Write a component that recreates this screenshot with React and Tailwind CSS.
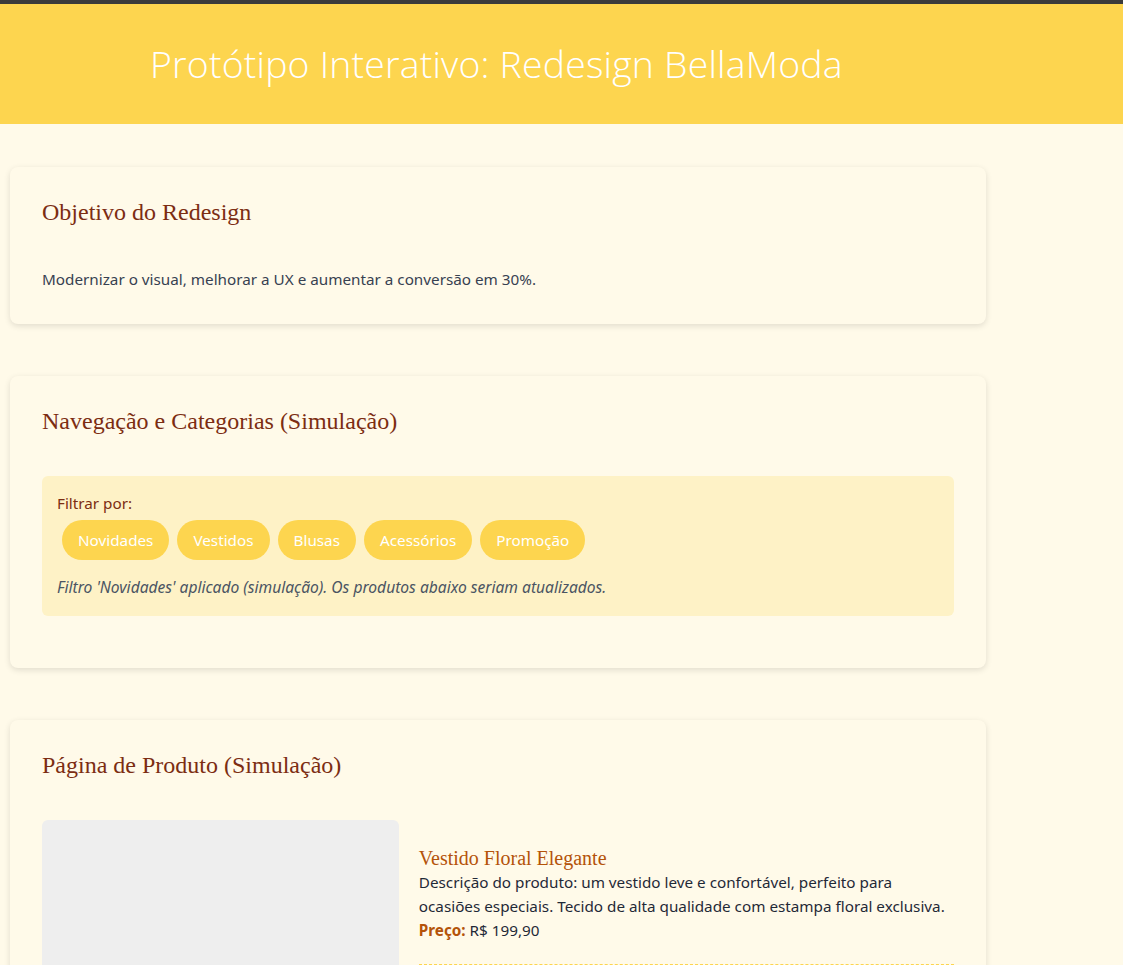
import { useState } from 'react';

const categories = ['Novidades', 'Vestidos', 'Blusas', 'Acessórios', 'Promoção'];

const Card = ({ title, children }) => (
    <section className="bg-[#fffae9] rounded-lg shadow-[0_2px_6px_rgba(0,0,0,0.12)] px-8 pt-8 pb-8">
        <h2 className="font-['Liberation_Serif',serif] text-[24px] leading-[27px] text-[#7c2d12] mb-[41px]">{title}</h2>
        {children}
    </section>
);

const App = () => {
    const [filter, setFilter] = useState('Novidades');

    return (
        <div className="min-h-screen bg-[#fffae9] font-['Noto_Sans',sans-serif] text-[15.25px]">
            <div className="h-[4px] bg-[#3b3b3b]" />
            <header className="h-[120px] bg-[#fdd54f] flex items-center pl-[150px]">
                <h1 className="font-['Open_Sans',sans-serif] font-light text-[37.4px] text-white tracking-[0.2px]">
                    Protótipo Interativo: Redesign BellaModa
                </h1>
            </header>

            <main className="w-[976px] ml-[10px] pt-[43px] flex flex-col gap-[52px]">
                <Card title="Objetivo do Redesign">
                    <p className="text-[#374151] leading-[25px]">
                        Modernizar o visual, melhorar a UX e aumentar a conversão em 30%.
                    </p>
                </Card>

                <Card title="Navegação e Categorias (Simulação)">
                    <div className="bg-[#fef2c6] rounded-md pt-[15px] px-[15px] pb-[17px] mb-5">
                        <p className="text-[#7c2d12] leading-6 mb-[5px]">Filtrar por:</p>
                        <div className="flex gap-2 pl-[5px]">
                            {categories.map(cat => (
                                <button
                                    key={cat}
                                    onClick={() => setFilter(cat)}
                                    className="h-10 px-4 rounded-full bg-[#fdd54f] text-white"
                                >
                                    {cat}
                                </button>
                            ))}
                        </div>
                        <p className="italic text-[15.6px] text-[#4b5563] leading-6 mt-[15px]">
                            Filtro '{filter}' aplicado (simulação). Os produtos abaixo seriam atualizados.
                        </p>
                    </div>
                </Card>

                <Card title="Página de Produto (Simulação)">
                    <div className="grid grid-cols-[2fr_3fr] gap-5">
                        <div className="h-[400px] bg-[#eeeeee] rounded-md" />
                        <div className="pt-[26px]">
                            <h3 className="font-['Liberation_Serif',serif] text-[20px] leading-6 text-[#b45309]">Vestido Floral Elegante</h3>
                            <p className="text-[#1f2937] leading-6">
                                Descrição do produto: um vestido leve e confortável, perfeito para ocasiões especiais. Tecido de alta qualidade com estampa floral exclusiva.
                            </p>
                            <p className="text-[#1f2937] leading-6">
                                <strong className="text-[#b45309]">Preço:</strong> R$ 199,90
                            </p>
                            <div className="mt-[22px] border-t border-dashed border-[#fdd54f] pt-4" />
                        </div>
                    </div>
                </Card>
            </main>
        </div>
    );
};

export default App;
